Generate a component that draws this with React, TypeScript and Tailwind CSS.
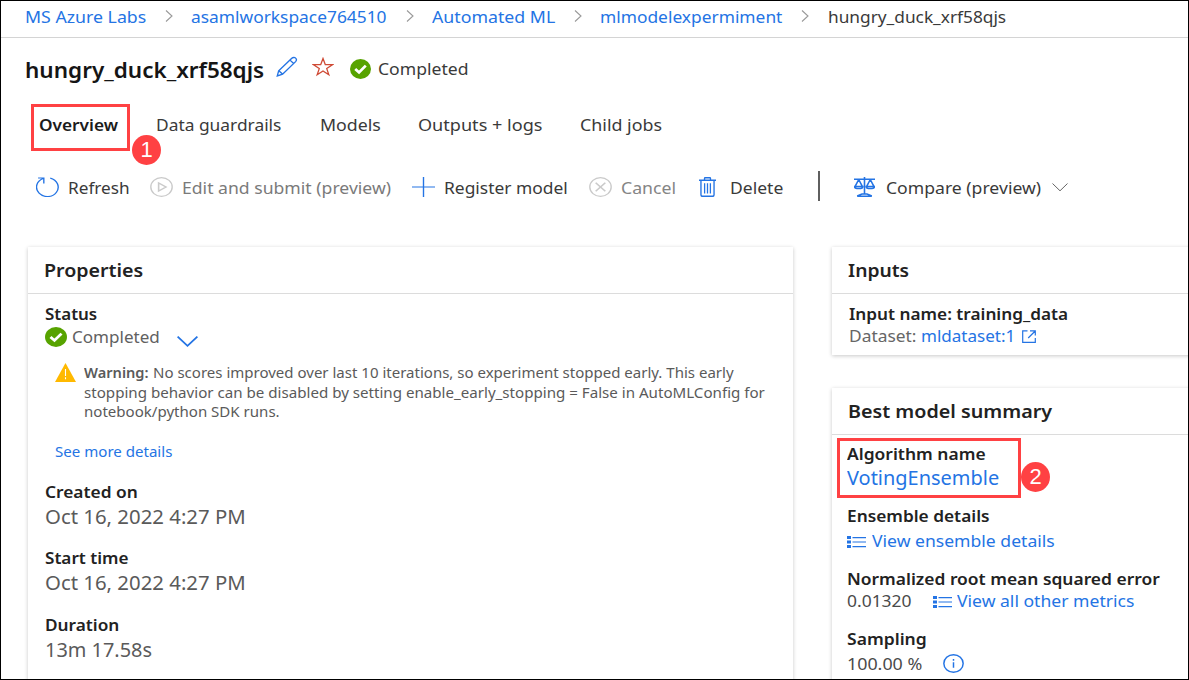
import React from "react";

type TextProps = { slot?: string; fit: string; children: React.ReactNode };

function T({ slot = "", fit, children }: TextProps) {
  return (
    <span className={`block shrink-0 whitespace-nowrap ${slot}`}>
      <span className={`inline-block origin-left align-top ${fit}`}>{children}</span>
    </span>
  );
}

type IconProps = { className?: string; children: React.ReactNode };

function Icon({ className = "", children }: IconProps) {
  return (
    <svg
      viewBox="0 0 20 20"
      preserveAspectRatio="none"
      fill="none"
      stroke="currentColor"
      strokeWidth="1.2"
      className={`block shrink-0 ${className}`}
    >
      {children}
    </svg>
  );
}

function CrumbChevron({ className = "" }: { className?: string }) {
  return (
    <svg viewBox="0 0 8 12" className={`mt-[2.5px] block h-3 w-2 shrink-0 ${className}`} fill="none" stroke="#9a9a9a" strokeWidth="1.1">
      <path d="M1 .5 7 6 1 11.5" />
    </svg>
  );
}

function CheckBadge({ className = "" }: { className?: string }) {
  return (
    <Icon className={className}>
      <circle cx="10" cy="10" r="10" fill="#57a300" stroke="none" />
      <path d="m5 10 3.6 3.4 6.4-6.7" stroke="#fff" strokeWidth="2.6" />
    </Icon>
  );
}

function ListIcon({ className = "" }: { className?: string }) {
  return (
    <svg viewBox="0 0 19 12" className={`block h-3 w-[19px] shrink-0 ${className}`} fill="#2474e4">
      <path d="M0 0h4v3H0zM0 4.5h4v3H0zM0 9h4v3H0z" />
      <path d="M5.5 1h13.5v1.2H5.5zM5.5 5.4h13.5v1.2H5.5zM5.5 10h13.5v1.2H5.5z" />
    </svg>
  );
}

function Marker({ className, children }: { className: string; children: React.ReactNode }) {
  return (
    <span
      className={`absolute flex h-[30px] w-[29px] items-center justify-center rounded-[50%] bg-[#ff4143] font-['Liberation_Sans',sans-serif] text-[22px] leading-none font-normal text-white ${className}`}
    >
      {children}
    </span>
  );
}

const card = "bg-white shadow-[0_1px_4px_rgba(0,0,0,0.22)]";
const cardTitle = "h-[47px] border-b border-[#dcdcdc] pl-[15.5px] pt-[11px] text-[18px] leading-6 font-semibold text-[#222]";
const label = "font-semibold text-[#222]";

export default function App() {
  return (
    <div className="flex h-[680px] w-[1189px] flex-col overflow-hidden border border-black bg-white font-['Noto_Sans','Open_Sans',sans-serif] text-[16px] leading-5 text-[#3a3a3a]">
      <nav className="flex h-[37px] shrink-0 border-b border-[#d4d4d4] pl-[23.5px] pt-1.5 text-[#2474e4]">
        <T slot="w-[140px]" fit="scale-x-[1.108]">MS Azure Labs</T>
        <CrumbChevron className="mr-[18.5px]" />
        <T slot="w-[214.5px]" fit="scale-x-[1.085]">asamlworkspace764510</T>
        <CrumbChevron className="mr-[18px]" />
        <T slot="w-[142px]" fit="scale-x-[1.108]">Automated ML</T>
        <CrumbChevron className="mr-[18.5px]" />
        <T slot="w-[201px]" fit="scale-x-[1.085]">mlmodelexpermiment</T>
        <CrumbChevron className="mr-[18.5px]" />
        <T slot="text-[#3a3a3a]" fit="scale-x-[1.08]">hungry_duck_xrf58qjs</T>
      </nav>

      <header className="mt-[18px] flex h-7 shrink-0 items-start pl-[23.5px]">
        <T slot="w-[250px] text-[21px] leading-7 font-semibold text-[#151515]" fit="scale-x-[1.071]">hungry_duck_xrf58qjs</T>
        <Icon className="h-[21px] w-[23px] text-[#2474e4]">
          <path d="M2 19 3.2 14 14.6 2.2c1-1 2.5-1 3.3-.2.9.9.9 2.2 0 3.3L6.6 17.3 2 19ZM3.3 14l3.2 3.2M13 3.9l3.3 3.2" />
        </Icon>
        <Icon className="ml-[14px] mt-[1px] h-[20px] w-[22px] text-[#cf4a35]">
          <path d="m10 1.5 2.1 6.1 6.5.1-5.2 3.9 1.9 6.2-5.3-3.7-5.3 3.7 1.9-6.2-5.2-3.9 6.5-.1L10 1.5Z" />
        </Icon>
        <CheckBadge className="ml-[16px] mt-[3px] h-[20px] w-[21px]" />
        <T slot="ml-[7px] mt-[2.5px]" fit="scale-x-[1.1]">Completed</T>
      </header>

      <div className="mt-[31px] flex h-5 shrink-0 pl-[37px]">
        <div className="relative w-[118px] font-semibold text-[#1b1b1b]">
          <T slot="pl-[0.5px]" fit="scale-x-[1.078]">Overview</T>
          <span className="absolute -left-[7px] -top-[11px] h-[47px] w-[99px] border-[3px] border-[#ff4143]" />
          <Marker className="left-[94px] top-[20px]">1</Marker>
        </div>
        <T slot="w-[164px]" fit="scale-x-[1.085]">Data guardrails</T>
        <T slot="w-[98px]" fit="scale-x-[1.11]">Models</T>
        <T slot="w-[162px]" fit="scale-x-[1.13]">Outputs + logs</T>
        <T fit="scale-x-[1.115]">Child jobs</T>
      </div>

      <div className="mt-[43px] flex h-5 shrink-0 pl-[34.5px]">
        <Icon className="-mt-px h-5 w-[23px] text-[#2474e4]">
          <path d="M12.4 1.1A9.4 9.4 0 1 1 6.2 1.5M1.8 1h5v5.4" />
        </Icon>
        <T slot="ml-[9px] w-[82.5px]" fit="scale-x-[1.075]">Refresh</T>
        <Icon className="-mt-px h-5 w-[23px] text-[#cacaca]">
          <circle cx="10" cy="10" r="9.3" />
          <path d="M7.5 6v8l6.4-4-6.4-4Z" strokeWidth="1.4" />
        </Icon>
        <T slot="ml-[8.5px] w-[230.5px] text-[#7a7a7a]" fit="scale-x-[1.1]">Edit and submit (preview)</T>
        <Icon className="-mt-px h-5 w-[23px] text-[#2474e4]">
          <path d="M10 0v20M0 10h20" />
        </Icon>
        <T slot="ml-[9px] w-[145px]" fit="scale-x-[1.088]">Register model</T>
        <Icon className="-mt-px h-5 w-[23px] text-[#cacaca]">
          <circle cx="10" cy="10" r="9.3" />
          <path d="m5.8 5.8 8.4 8.4M14.2 5.8l-8.4 8.4" strokeWidth="1.4" />
        </Icon>
        <T slot="ml-[9px] w-[78px] text-[#858585]" fit="scale-x-[1.105]">Cancel</T>
        <Icon className="-mt-px h-5 w-[17px] text-[#2474e4]">
          <path d="M0 3.3h20M2.3 3.3v14.4q0 1.6 1.8 1.6h11.8q1.8 0 1.8-1.6V3.3M6.5 3V1.6q0-.9 1-.9h5q1 0 1 .9V3" strokeWidth="1.6" />
          <path d="M6.6 6.3v10.2M10 6.3v10.2M13.4 6.3v10.2" strokeWidth="1.5" />
        </Icon>
        <T slot="ml-[13.5px] w-[88px]" fit="scale-x-[1.095]">Delete</T>
        <span className="-mt-[7px] block h-[30px] w-[2px] bg-[#5f5f5f]" />
        <Icon className="-mt-px ml-[34.5px] h-5 w-[21px] text-[#2474e4]">
          <path d="M10 0v16.5M0 2.2h20M3 19.3h14M3 19l4.6-2h4.8l4.6 2" strokeWidth="1.5" />
          <path d="M4.5 2.5 1.2 9.2M4.5 2.5l3.3 6.7M15.5 2.5l-3.3 6.7M15.5 2.5l3.3 6.7M.5 9.5h8c0 2.8-8 2.8-8 0ZM11.5 9.5h8c0 2.8-8 2.8-8 0Z" strokeWidth="1.5" />
        </Icon>
        <T slot="ml-[11px] w-[166px]" fit="scale-x-[1.1]">Compare (preview)</T>
        <svg viewBox="0 0 16 9" className="mt-[4.5px] block h-[9px] w-4" fill="none" stroke="#666">
          <path d="M.5.5 8 7.8 15.5.5" />
        </svg>
      </div>

      <main className="mt-[49px] flex min-h-0 flex-1 items-start pl-[27px]">
        <section className={`h-[450px] w-[765px] shrink-0 ${card}`}>
          <h2 className={cardTitle}><T fit="scale-x-[1.09]">Properties</T></h2>
          <div className="pl-[16.5px] pt-[10px]">
            <T slot={label} fit="scale-x-[1.06]">Status</T>
            <div className="mt-[3px] flex h-5">
              <CheckBadge className="h-5 w-[22px]" />
              <T slot="ml-[5.5px] w-[104.5px] text-[#616161]" fit="scale-x-[1.065]">Completed</T>
              <svg viewBox="0 0 21 11" className="mt-[9px] block h-[11px] w-[21px]" fill="none" stroke="#2474e4" strokeWidth="1.8">
                <path d="M.6.6 10.5 9.8 20.4.6" />
              </svg>
            </div>
            <div className="mt-[16px] flex pl-[10px] text-[14px] text-[#5a5a5a]">
              <svg viewBox="0 0 21 19" className="block h-[19px] w-[21px] shrink-0">
                <path d="M10.5 0 21 19H0Z" fill="#ffb900" />
                <path d="M10.5 6v7M10.5 14.3v2" stroke="#fff" strokeWidth="1.1" />
              </svg>
              <div className="ml-[8px]">
                <div className="flex">
                  <T slot="w-[69px] font-semibold" fit="scale-x-[1.045]">Warning:</T>
                  <T fit="scale-x-[1.073]">No scores improved over last 10 iterations, so experiment stopped early. This early</T>
                </div>
                <T fit="scale-x-[1.08]">stopping behavior can be disabled by setting enable_early_stopping = False in AutoMLConfig for</T>
                <T slot="-mt-px" fit="scale-x-[1.075]">notebook/python SDK runs.</T>
              </div>
            </div>
            <T slot="ml-[10.5px] mt-5 text-[14px] text-[#2474e4]" fit="scale-x-[1.076]">See more details</T>
            <T slot={`mt-[20px] ${label}`} fit="scale-x-[1.083]">Created on</T>
            <T slot="mt-[3px] text-[20px] leading-6 text-[#5a5a5a]" fit="scale-x-[1.018]">Oct 16, 2022 4:27 PM</T>
            <T slot={`mt-[19px] ${label}`} fit="scale-x-[1.07]">Start time</T>
            <T slot="mt-[3px] text-[20px] leading-6 text-[#5a5a5a]" fit="scale-x-[1.018]">Oct 16, 2022 4:27 PM</T>
            <T slot={`mt-[20px] ${label}`} fit="scale-x-[1.077]">Duration</T>
            <T slot="mt-[3px] text-[20px] leading-6 text-[#5a5a5a]" fit="scale-x-[0.995]">13m 17.58s</T>
          </div>
        </section>

        <div className="ml-[39px] shrink-0">
          <section className={`h-[108px] w-[400px] ${card}`}>
            <h2 className={cardTitle}><T fit="scale-x-[1.07]">Inputs</T></h2>
            <div className="pl-[16.5px] pt-[10px]">
              <T slot={label} fit="scale-x-[1.075]">Input name: training_data</T>
              <div className="mt-[2px] flex">
                <T slot="w-[72px] text-[#666]" fit="scale-x-[1.085]">Dataset:</T>
                <T slot="w-[101.5px] text-[#2474e4]" fit="scale-x-[1.065]">mldataset:1</T>
                <svg viewBox="0 0 14 13" className="mt-1 block h-[13px] w-[14px]" fill="none" stroke="#2474e4" strokeWidth="1.2">
                  <path d="M5.5.9H.7v11.4h12.6V8M8 .9h5.3v4.6M13.2 1 6.2 8" />
                </svg>
              </div>
            </div>
          </section>

          <section className={`mt-[33px] h-[310px] w-[400px] ${card}`}>
            <h2 className={cardTitle}><T fit="scale-x-[1.095]">Best model summary</T></h2>
            <div className="pl-[15px] pt-[9px]">
              <div className="relative">
                <T slot={label} fit="scale-x-[1.09]">Algorithm name</T>
                <T slot="mt-[2px] text-[19px] leading-6 text-[#2474e4]" fit="scale-x-[1.05]">VotingEnsemble</T>
                <span className="absolute -left-[10px] -top-[6px] h-[60px] w-[184px] border-[3px] border-[#ff4143]" />
                <Marker className="left-[174px] top-[18px]">2</Marker>
              </div>
              <T slot={`mt-[16px] ${label}`} fit="scale-x-[1.08]">Ensemble details</T>
              <div className="mt-[5px] flex text-[#2474e4]">
                <ListIcon className="mt-[5px]" />
                <T slot="ml-[5.5px]" fit="scale-x-[1.098]">View ensemble details</T>
              </div>
              <T slot={`mt-[18px] ${label}`} fit="scale-x-[1.088]">Normalized root mean squared error</T>
              <div className="mt-[2px] flex text-[#2474e4]">
                <T slot="w-[85.5px] text-[#4a4a4a]" fit="scale-x-[1.09]">0.01320</T>
                <ListIcon className="mt-[5px]" />
                <T slot="ml-[5px]" fit="scale-x-[1.098]">View all other metrics</T>
              </div>
              <T slot={`mt-[18px] ${label}`} fit="scale-x-[1.095]">Sampling</T>
              <div className="mt-[4.5px] flex">
                <T slot="w-[96px] text-[#4a4a4a]" fit="scale-x-[1.115]">100.00 %</T>
                <Icon className="h-[19px] w-[21px] text-[#2474e4]">
                  <circle cx="10" cy="10" r="9.2" strokeWidth="1.4" />
                  <path d="M10 8.6v6M10 5.3v1.7" strokeWidth="1.4" />
                </Icon>
              </div>
            </div>
          </section>
        </div>
      </main>
    </div>
  );
}
